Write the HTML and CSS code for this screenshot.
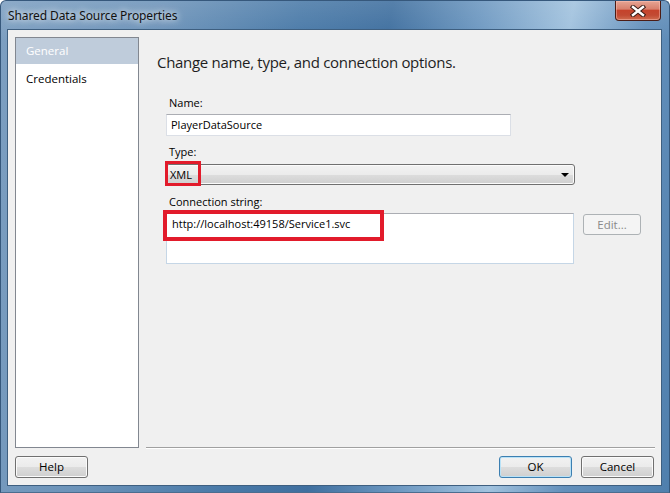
FILE: index.html
```html
<!DOCTYPE html>
<html>
<head>
<meta charset="utf-8">
<link rel="stylesheet" href="styles.css">
</head>
<body>
<div class="window">
  <div class="titlebar">
    <span class="title">Shared Data Source Properties</span>
    <div class="close">
      <svg width="16" height="12" viewBox="0 0 16 12">
        <path d="M3 2 L13 10 M13 2 L3 10" stroke="#3a1c16" stroke-width="4.4" stroke-linecap="square"/>
        <path d="M3 2 L13 10 M13 2 L3 10" stroke="#ffffff" stroke-width="2.4" stroke-linecap="square"/>
      </svg>
    </div>
  </div>
  <div class="client">
    <div class="main">
      <ul class="nav">
        <li class="sel">General</li>
        <li>Credentials</li>
      </ul>
      <div class="content">
        <h1 class="heading">Change name, type, and connection options.</h1>
        <div class="fields">
          <div class="label label-name">Name:</div>
          <div class="textbox name-box">PlayerDataSource</div>
          <div class="label label-type">Type:</div>
          <div class="select-row">
            <div class="select">
              <span class="select-text">XML</span>
              <span class="arrow"></span>
            </div>
            <div class="mark mark-type"></div>
          </div>
          <div class="label label-conn">Connection string:</div>
          <div class="conn-row">
            <div class="textbox conn-box">http://localhost:49158/Service1.svc</div>
            <div class="btn btn-disabled">Edit...</div>
            <div class="mark mark-conn"></div>
          </div>
        </div>
      </div>
    </div>
    <div class="footer">
      <div class="btn">Help</div>
      <div class="spacer"></div>
      <div class="btn btn-default">OK</div>
      <div class="btn">Cancel</div>
    </div>
  </div>
</div>
</body>
</html>
```

FILE: styles.css
```css
* { box-sizing: border-box; }
html, body {
  margin: 0;
  padding: 0;
  background: #ffffff;
}
body {
  width: 670px;
  height: 493px;
  overflow: hidden;
  font-family: "Open Sans", "Noto Sans", sans-serif;
  font-size: 11px;
  color: #000;
}
.window {
  width: 670px;
  height: 493px;
  display: flex;
  flex-direction: column;
  padding: 0 7px 6px 6px;
  border-radius: 6px 6px 0 0;
  border: 1px solid #36587c;
  border-bottom-color: #4b6d8f;
  background:
    linear-gradient(to bottom, rgba(255,255,255,0.12), rgba(255,255,255,0) 40px),
    linear-gradient(100deg, #7d9fc1 0%, #6c93b9 22%, #4a7aa8 40%, #3f6f9f 52%, #6d98c1 64%, #a1c2de 76%, #6490bb 86%, #4f7fad 100%);
}
.titlebar {
  height: 28px;
  display: flex;
  justify-content: space-between;
  align-items: flex-start;
}
.title {
  margin-top: 6px;
  margin-left: 1px;
  font-family: "Noto Sans", "Open Sans", sans-serif;
  font-size: 12px;
  letter-spacing: -0.1px;
  color: #111;
  text-shadow: 0 0 6px rgba(255,255,255,0.9), 0 0 10px rgba(255,255,255,0.7);
}
.close {
  width: 46px;
  height: 20px;
  margin-right: 1px;
  border: 1px solid #4c1c14;
  border-top: none;
  border-radius: 0 0 4px 4px;
  background: linear-gradient(to bottom, #e6a594 0%, #d8806d 42%, #c5432c 50%, #c24a33 75%, #d06d50 100%);
  box-shadow: inset 0 0 0 1px rgba(255,200,190,0.45);
  display: flex;
  align-items: center;
  justify-content: center;
}
.client {
  flex: 1;
  display: flex;
  flex-direction: column;
  background: #f0f0f0;
  border: 1px solid #3e5f80;
}
.main {
  height: 418px;
  display: flex;
  padding: 7px 6px 0 7px;
  gap: 7px;
}
.nav {
  list-style: none;
  margin: 0;
  padding: 0;
  width: 124px;
  height: 411px;
  border: 1px solid #828790;
  background: #fff;
  font-size: 11.5px;
}
.nav li {
  height: 26px;
  line-height: 26px;
  padding-left: 10px;
}
.nav li.sel {
  background: #bfccdb;
  color: #ffffff;
}
.nav li + li {
  margin-top: 2px;
}
.content {
  flex: 1;
  height: 411px;
  border-bottom: 1px solid #a0a0a0;
  box-shadow: 0 1px 0 #ffffff;
  padding-left: 11px;
}
.heading {
  margin: 15px 0 0 0;
  font-weight: normal;
  font-size: 15px;
  line-height: 20px;
  letter-spacing: -0.3px;
  color: #1e1e1e;
}
.fields {
  padding-left: 9px;
  display: flex;
  flex-direction: column;
  align-items: flex-start;
}
.label {
  height: 14px;
  line-height: 14px;
  padding-left: 3px;
}
.label-name { margin-top: 24px; }
.label-type { margin-top: 9px; }
.label-conn { margin-top: 10px; }
.textbox {
  background: #fff;
  border: 1px solid #dbdfe6;
  border-top-color: #abadb3;
  padding-left: 4px;
}
.name-box {
  margin-top: 4px;
  width: 345px;
  height: 22px;
  line-height: 19px;
}
.select-row {
  position: relative;
  margin-top: 5px;
}
.select {
  width: 409px;
  height: 21px;
  border: 1px solid #707070;
  border-radius: 3px;
  background: linear-gradient(to bottom, #f2f2f2 0%, #ebebeb 50%, #dddddd 50%, #cfcfcf 100%);
  box-shadow: inset 0 0 0 1px #fbfbfb;
  display: flex;
  align-items: center;
  justify-content: space-between;
  padding: 0 5px 0 3px;
}
.select-text {
  line-height: 18px;
}
.arrow {
  width: 0;
  height: 0;
  border-left: 4px solid transparent;
  border-right: 4px solid transparent;
  border-top: 4px solid #000;
}
.mark {
  position: absolute;
  border-style: solid;
  border-color: #e21b2b;
}
.mark-type {
  left: -1px;
  top: -3px;
  width: 36px;
  height: 25px;
  border-width: 3px;
}
.conn-row {
  position: relative;
  margin-top: 4px;
  display: flex;
  align-items: flex-start;
  gap: 9px;
}
.conn-box {
  width: 408px;
  height: 51px;
  padding-top: 2px;
  padding-left: 5px;
  border-color: #c5d6e6;
  border-top-color: #abadb3;
}
.mark-conn {
  left: -3px;
  top: -3px;
  width: 221px;
  height: 31px;
  border-width: 4px;
}
.btn {
  width: 73px;
  height: 22px;
  line-height: 19px;
  text-align: center;
  font-size: 11.5px;
  border: 1px solid #707070;
  border-radius: 3px;
  background: linear-gradient(to bottom, #f2f2f2 0%, #ebebeb 50%, #dddddd 50%, #cfcfcf 100%);
  box-shadow: inset 0 0 0 1px #fbfbfb;
}
.btn-default {
  border-color: #3c7fb1;
  box-shadow: inset 0 0 0 1px #b9e2f7;
}
.btn-disabled {
  width: 58px;
  height: 21px;
  margin-top: 1px;
  color: #8a8a8a;
  border-color: #adb2b5;
  background: #f4f4f4;
  box-shadow: none;
}
.footer {
  flex: 1;
  display: flex;
  align-items: flex-start;
  padding: 8px 7px 0 7px;
  gap: 9px;
}
.spacer { flex: 1; }
```
